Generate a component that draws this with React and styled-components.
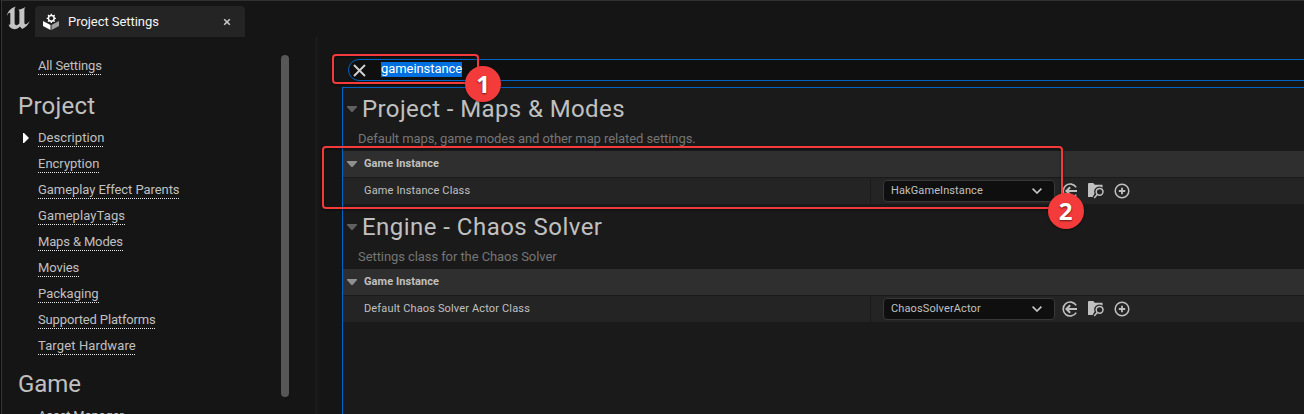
import React from 'react';
import styled, { createGlobalStyle } from 'styled-components';

const Global = createGlobalStyle`
  * { box-sizing: border-box; }
  body { margin: 0; background: #151515; overflow: hidden; }
`;

const Window = styled.div`
  position: relative;
  display: flex;
  flex-direction: column;
  width: 1304px;
  height: 414px;
  overflow: hidden;
  background: #151515;
  border-left: 1px solid #0a0a0a;
  border-top: 1px solid #303030;
  box-shadow: inset 1px 0 0 #353535;
  font-family: Roboto, sans-serif;
  color: #c0c0c0;
`;

const TitleBar = styled.header`
  display: flex;
  flex: none;
  height: 36px;
  padding: 5px 0 0 5px;
`;

const LogoSlot = styled.div`
  width: 29px;
  svg { display: block; }
`;

const Tab = styled.div`
  display: flex;
  align-items: center;
  width: 210px;
  height: 31px;
  padding: 0 14px 0 8px;
  background: #242424;
  border-radius: 4px 4px 0 0;
  color: #f5f5f5;
  font-size: 13px;
  letter-spacing: -0.05px;
  svg { display: block; flex: none; }
`;

const TabLabel = styled.span`
  flex: 1;
  margin-left: 9px;
  white-space: nowrap;
`;

const Body = styled.div`
  display: flex;
  flex: 1;
  min-height: 0;
`;

const Sidebar = styled.nav`
  display: flex;
  width: 317px;
  overflow: hidden;
  border-right: 3px solid #1a1a1a;
  flex: none;
`;

const LinkList = styled.div`
  width: 280px;
  flex: none;
  padding-top: 16px;
`;

const NavItem = styled.div`
  display: flex;
  align-items: center;
  height: 26px;
  padding-left: 21px;
`;

const Marker = styled.span`
  width: 16px;
  svg { display: block; }
`;

const NavLink = styled.span`
  height: 17px;
  font-size: 13px;
  line-height: 16px;
  letter-spacing: ${(p) => p.$track || 0}px;
  white-space: nowrap;
  background: repeating-linear-gradient(90deg, #e8e8e8 0 1px, transparent 1px 2px) 0 100% / 100% 1px no-repeat;
`;

const NavHeading = styled.h2`
  margin: 0;
  height: ${(p) => p.$height}px;
  padding: ${(p) => p.$top}px 0 0 17px;
  font-size: 24px;
  line-height: 28px;
  font-weight: 400;
  letter-spacing: ${(p) => p.$track}px;
`;

const Scrollbar = styled.div`
  width: 8px;
  height: 342px;
  margin-top: 18px;
  border-radius: 4px;
  background: #575757;
`;

const Main = styled.main`
  flex: 1;
  min-width: 0;
  display: flex;
  flex-direction: column;
  padding: 22px 0 0 23px;
`;

const SearchBox = styled.div`
  display: flex;
  align-items: center;
  flex: none;
  height: 22px;
  margin: 0 -4px 6px 7px;
  padding-left: 4px;
  border: 1px solid #0063c5;
  border-radius: 11px 0 0 11px;
  background: #0f0f0f;
  svg { display: block; }
`;

const SelectedText = styled.span`
  height: 15px;
  margin: -1px 0 0 15px;
  font-size: 13px;
  line-height: 14px;
  letter-spacing: -0.07px;
  color: #fff;
  background: #0070e0;
`;

const Details = styled.div`
  flex: 1;
  margin: 0 -2px -2px 1px;
  border: 1px solid #0063c5;
  background: #1a1a1a;
`;

const SectionBlock = styled.section`
  height: 118px;
`;

const SectionHead = styled.div`
  height: 63px;
  padding-top: 6px;
`;

const TitleLine = styled.div`
  display: flex;
  align-items: center;
  height: 30px;
  padding-left: 4px;
  font-size: 24px;
  svg { display: block; }
`;

const Title = styled.h1`
  margin: 0 0 0 5px;
  font-size: 24px;
  line-height: 30px;
  font-weight: 400;
  letter-spacing: ${(p) => p.$track}px;
`;

const Description = styled.p`
  margin: 7px 0 0 15px;
  font-size: 13px;
  line-height: 16px;
  letter-spacing: -0.08px;
  color: #757575;
`;

const Category = styled.div`
  display: flex;
  align-items: center;
  height: 27px;
  padding: 0 0 1px 4px;
  border-bottom: 1px solid #1a1a1a;
  background: #2f2f2f;
  font-size: 11px;
  font-weight: 700;
  letter-spacing: 0.08px;
  svg { display: block; margin-right: 7px; }
`;

const Row = styled.div`
  display: flex;
  height: 26px;
  background: #242424;
`;

const RowLabel = styled.div`
  width: 528px;
  padding-left: 21px;
  border-right: 1px solid #1a1a1a;
  font-size: 11px;
  line-height: 26px;
  letter-spacing: ${(p) => p.$track}px;
`;

const RowValue = styled.div`
  display: flex;
  align-items: center;
  padding-left: 12px;
  svg { display: block; }
`;

const Select = styled.div`
  display: flex;
  align-items: center;
  justify-content: space-between;
  width: 172px;
  height: 22px;
  padding: 0 12px 0 7px;
  border: 1px solid #383838;
  border-radius: 4px;
  background: #0f0f0f;
  font-size: 11px;
  line-height: 18px;
  letter-spacing: ${(p) => p.$track}px;
`;

const Actions = styled.div`
  display: flex;
  gap: 10px;
  margin-left: 7px;
`;

const Highlight = styled.div`
  position: absolute;
  left: ${(p) => p.$x}px;
  top: ${(p) => p.$y}px;
  width: ${(p) => p.$w}px;
  height: ${(p) => p.$h}px;
  border: 2px solid #f43b3b;
  border-radius: 4px;
  filter: drop-shadow(0 1px 1px rgba(0, 0, 0, 0.5));
`;

const Badge = styled.div`
  position: absolute;
  left: ${(p) => p.$x}px;
  top: ${(p) => p.$y}px;
  width: 36px;
  height: 36px;
  border-radius: 50%;
  background: #f43b3b;
  color: #fff;
  font: 700 24px/36px "Open Sans", sans-serif;
  text-align: center;
  text-shadow: 0 1px 2px rgba(0, 0, 0, 0.6);
  box-shadow: 0 1px 2px rgba(0, 0, 0, 0.5);
`;

const Logo = () => (
  <svg width="24" height="24" viewBox="0 0 24 24" fill="#c4c4c4">
    <path d="M0.7 10.3C1.6 5.6 4.6 2.2 9.9 0.6C9 1.6 8.6 2.6 8.6 4V16.8C8.6 18.3 9.3 19.2 10.5 19.2C11.6 19.1 12.6 18.3 13.4 17.3V6C13.4 4.7 13 4 12 3.8C14.5 3.5 17.2 2.5 19.7 0.7C18.8 1.7 18.4 2.6 18.4 3.8V16.5C18.4 17.6 18.8 18.3 19.6 18.3C20.8 18.2 22.2 16.8 23.6 15C22.6 18.4 19.8 21.3 16.2 23L13.8 20.4C12.4 22.2 10.6 23.2 8.6 23.2C5.5 23.1 2.9 21.3 2.7 18.6C3.7 19 4.3 18.4 4.3 17.4V8.2C4.3 7.3 4.2 6.8 3.6 6.8C2.4 6.9 1.4 8.6 0.7 10.3Z" />
  </svg>
);

const SettingsIcon = () => (
  <svg width="16" height="17" viewBox="0 0 16 17">
    <path d="M0 8L7.5 12V17L0 13Z" fill="#fff" />
    <path d="M16 8L8.5 12V17L16 13Z" fill="#a0a0a0" />
    <circle cx="8.3" cy="5.3" r="2.9" fill="none" stroke="#fff" strokeWidth="1.5" />
    <g stroke="#fff" strokeWidth="1.3">
      <path d="M8.3 0.7v1.5M8.3 8.4v1.5M3.7 5.3h1.5M11.4 5.3h1.5M5 2l1.1 1.1M10.5 7.5l1.1 1.1M5 8.6l1.1-1.1M10.5 3.1L11.6 2" />
    </g>
  </svg>
);

const TabClose = () => (
  <svg width="8" height="8" viewBox="0 0 8 8" stroke="#c8c8c8" strokeWidth="1.6">
    <path d="M1.2 1.2l5.6 5.6M6.8 1.2L1.2 6.8" />
  </svg>
);

const ClearIcon = () => (
  <svg width="13" height="13" viewBox="0 0 13 13" stroke="#d0d0d0" strokeWidth="1.9">
    <path d="M1 1l11 11M12 1L1 12" />
  </svg>
);

const Expander = ({ color }) => (
  <svg width="10" height="6" viewBox="0 0 10 6" fill={color}>
    <path d="M0 0h10v1L5.6 6H4.4L0 1z" />
  </svg>
);

const Pointer = () => (
  <svg width="7" height="10" viewBox="0 0 7 10" fill="#fff">
    <path d="M1 0h1l4.5 4.5v1L2 10H1z" />
  </svg>
);

const Chevron = () => (
  <svg width="10" height="6" viewBox="0 0 10 6" fill="none" stroke="#c8c8c8" strokeWidth="1.6">
    <path d="M0.6 0.6L5 5L9.4 0.6" />
  </svg>
);

const UseSelected = () => (
  <svg width="16" height="16" viewBox="0 0 16 16" fill="none" stroke="#c0c0c0" strokeWidth="1.6">
    <path d="M14.2 4.4A7 7 0 1 0 14.2 11.6" />
    <path d="M15 8H4.6M8.2 4.2L4.4 8l3.8 3.8" strokeWidth="2" />
  </svg>
);

const Browse = () => (
  <svg width="16" height="16" viewBox="0 0 16 16" fill="none">
    <path d="M0 1Q0 0 1 0h4.2l1.6 1.7H14.5v3.1A5 5 0 0 0 6.6 10.5L4.6 14H0z" fill="#c0c0c0" />
    <circle cx="11.6" cy="8.8" r="3.4" stroke="#c0c0c0" strokeWidth="1.5" />
    <path d="M9.2 11.4L6.2 15" stroke="#c0c0c0" strokeWidth="1.5" />
  </svg>
);

const AddIcon = () => (
  <svg width="16" height="16" viewBox="0 0 16 16" fill="none" stroke="#c0c0c0" strokeWidth="1.5">
    <circle cx="8" cy="8" r="6.8" />
    <path d="M8 4.8v6.4M4.8 8h6.4" strokeWidth="1.8" />
  </svg>
);

const Nav = ({ children, active, track }) => (
  <NavItem>
    <Marker>{active && <Pointer />}</Marker>
    <NavLink $track={track}>{children}</NavLink>
  </NavItem>
);

const Section = ({ title, track, description, label, labelTrack, value, valueTrack }) => (
  <SectionBlock>
    <SectionHead>
      <TitleLine>
        <Expander color="#606060" />
        <Title $track={track}>{title}</Title>
      </TitleLine>
      <Description>{description}</Description>
    </SectionHead>
    <Category>
      <Expander color="#909090" />
      Game Instance
    </Category>
    <Row>
      <RowLabel $track={labelTrack}>{label}</RowLabel>
      <RowValue>
        <Select $track={valueTrack}>
          {value}
          <Chevron />
        </Select>
        <Actions>
          <UseSelected />
          <Browse />
          <AddIcon />
        </Actions>
      </RowValue>
    </Row>
  </SectionBlock>
);

export default function App() {
  return (
    <Window>
      <Global />
      <TitleBar>
        <LogoSlot><Logo /></LogoSlot>
        <Tab>
          <SettingsIcon />
          <TabLabel>Project Settings</TabLabel>
          <TabClose />
        </Tab>
      </TitleBar>
      <Body>
        <Sidebar>
          <LinkList>
            <Nav track={-0.15}>All Settings</Nav>
            <NavHeading $height={46} $top={13} $track={0.25}>Project</NavHeading>
            <Nav active track={0.05}>Description</Nav>
            <Nav>Encryption</Nav>
            <Nav track={-0.06}>Gameplay Effect Parents</Nav>
            <Nav track={0.1}>GameplayTags</Nav>
            <Nav track={-0.15}>{'Maps & Modes'}</Nav>
            <Nav track={-0.1}>Movies</Nav>
            <Nav>Packaging</Nav>
            <Nav track={-0.15}>Supported Platforms</Nav>
            <Nav track={0.12}>Target Hardware</Nav>
            <NavHeading $height={44} $top={11} $track={-0.1}>Game</NavHeading>
            <Nav track={-0.15}>Asset Manager</Nav>
          </LinkList>
          <Scrollbar />
        </Sidebar>
        <Main>
          <SearchBox>
            <ClearIcon />
            <SelectedText>gameinstance</SelectedText>
          </SearchBox>
          <Details>
            <Section
              title="Project - Maps & Modes"
              track={0.4}
              description="Default maps, game modes and other map related settings."
              label="Game Instance Class"
              labelTrack={0.14}
              value="HakGameInstance"
              valueTrack={0.1}
            />
            <Section
              title="Engine - Chaos Solver"
              track={0.46}
              description="Settings class for the Chaos Solver"
              label="Default Chaos Solver Actor Class"
              labelTrack={0.15}
              value="ChaosSolverActor"
              valueTrack={0.12}
            />
          </Details>
        </Main>
      </Body>
      <Highlight $x={331} $y={53} $w={147} $h={30} />
      <Highlight $x={321} $y={145} $w={741} $h={63} />
      <Badge $x={464} $y={65}>1</Badge>
      <Badge $x={1046.5} $y={192}>2</Badge>
    </Window>
  );
}
